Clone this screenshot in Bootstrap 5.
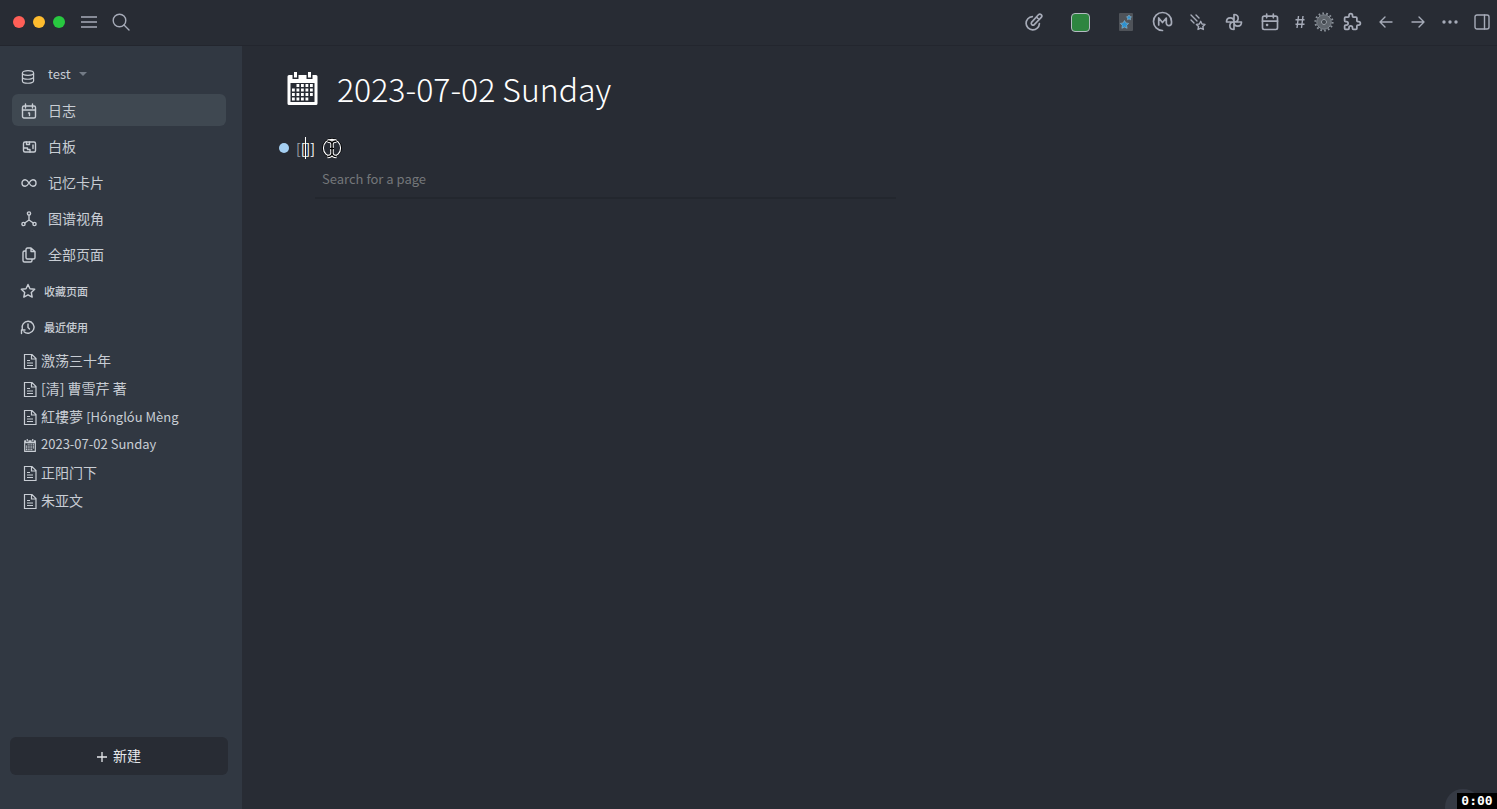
<!DOCTYPE html>
<html lang="zh-CN" data-bs-theme="dark">
<head>
<meta charset="utf-8">
<meta name="viewport" content="width=device-width, initial-scale=1">
<title>2023-07-02 Sunday</title>
<link href="https://cdn.jsdelivr.net/npm/bootstrap@5.3.0/dist/css/bootstrap.min.css" rel="stylesheet">
<style>
  body { background: #282c34; color: #c8cdd4; font: 14px/20px "Noto Sans CJK SC", sans-serif; }
  svg { display: block; flex: none; }
  .line { fill: none; stroke: currentColor; stroke-width: 2; stroke-linecap: round; stroke-linejoin: round; }
  .thin { stroke-width: 1.4; }
  .latin { font-size: 13px; }
  .topbar { height: 46px; padding-bottom: 2px; color: #a6abb8; border-bottom: 1px solid #23262e; }
  .lights { gap: 8px; padding: 0 8px 0 13px; }
  .light { width: 12px; height: 12px; }
  .light-close { background: #ff5f57; }
  .light-min { background: #febc2e; }
  .light-max { background: #28c840; }
  .tool { border: 0; padding: 0; background: none; color: inherit; height: 36px; width: 36px; display: flex; align-items: center; justify-content: center; }
  .tool.slim { width: 32px; }
  .tool.tight { width: 24px; }
  .tool.wide { width: 56px; }
  .tool.edge { width: 31px; }
  .history { padding-left: 2px; }
  .swatch { width: 19px; height: 19px; margin-top: 2px; background: #2e8540; border: 1px solid #b5bac2; border-radius: 4px; }
  .emoji-tile { width: 14px; height: 18px; background: #4f5359; border-radius: 1px; }
  .sidebar { width: 242px; background: #313842; padding: 12px 14px 34px 10px; }
  .sidebar a { color: inherit; text-decoration: none; }
  .sidebar a svg { margin-top: 2px; }
  .graph { border: 0; background: none; color: inherit; height: 32px; margin-bottom: 4px; padding: 0 0 0 11px; gap: 13px; font-size: 13px; text-align: left; }
  .graph > svg { margin-top: 5px; }
  .side-list a { height: 32px; margin: 0 2px 4px; padding: 0 9px; gap: 11px; border-radius: 6px; }
  .side-list a.active { background: #3f4851; }
  .side-head { height: 32px; margin: 0 0 4px; padding: 2px 0 0 10px; gap: 8px; font-size: 11px; font-weight: 500; line-height: 20px; color: #c8cdd4; }
  .recent a { height: 28px; padding-left: 13px; gap: 4px; }
  .create { height: 38px; border: 0; border-radius: 6px; background: #282c34; color: #e6e8eb; gap: 6px; padding-bottom: 3px; }
  .page { padding: 18px 36px; }
  .page h1 { font-size: 32px; font-weight: 300; line-height: 46px; height: 48px; color: #fff; gap: 19px; padding-left: 9px; }
  .block { margin-top: 26px; height: 20px; gap: 7px; color: #fff; }
  .bullet { width: 10px; height: 10px; background: #a5d0f3; margin-left: 1px; }
  .dim { color: #a0a4aa; }
  .caret { width: 1px; height: 22px; background: #fff; left: 50%; top: -1px; }
  .finder { width: 581px; max-width: 100%; margin: 5px 0 0 37px; border-bottom: 2px solid #23272e; }
  .finder input { width: 100%; height: 34px; border: 0; outline: 0; background: none; padding: 0 7px 4px; font-size: 13px; }
  .finder input::placeholder { color: #74777a; opacity: 1; }
  .help-disc { right: 16px; bottom: -16px; width: 36px; height: 36px; background: #353a44; }
  .clock { right: 0; bottom: 0; width: 40px; height: 16px; background: #000; color: #fff; font: bold 13px/16px "DejaVu Sans Mono", monospace; text-align: center; }
</style>
</head>
<body>
<svg width="0" height="0" class="position-absolute" aria-hidden="true">
  <symbol id="file" viewBox="0 0 14 16"><path d="M1.500 1.500h7.500l4 4v10H1.500zM8.500 1.500V6H13M4 7.500h3M4 10h6M4 12.500h6" fill="none" stroke="currentColor" stroke-width="1.200"/></symbol>
  <symbol id="month" viewBox="0 0 30 33"><path fill="currentColor" fill-rule="evenodd" d="M1.500 3H5v4h6V3h8v4h6V3h3.500Q30 3 30 4.500v27q0 1.500-1.500 1.500h-27Q0 33 0 31.500v-27Q0 3 1.500 3zM3 11v19h24V11zM6.500 0h3v5.500h-3zM20.500 0h3v5.500h-3z"/><path stroke="currentColor" stroke-width="2.800" stroke-dasharray="2.800 1.700" d="M9 13.500h16.500M4.500 18h21M4.500 22.500h21M4.500 27h16.500" fill="none"/></symbol>
</svg>
<div class="d-flex flex-column vh-100 overflow-hidden position-relative">
  <header class="topbar d-flex align-items-center flex-shrink-0">
    <div class="lights d-flex align-items-center">
      <span class="light light-close rounded-circle"></span>
      <span class="light light-min rounded-circle"></span>
      <span class="light light-max rounded-circle"></span>
    </div>
    <button class="tool slim" aria-label="Menu"><svg width="16" height="14" viewBox="0 0 16 14" stroke="currentColor" stroke-width="1.500"><path d="M0 2h16M0 7h16M0 12h16"/></svg></button>
    <button class="tool slim" aria-label="Search"><svg width="18" height="18" viewBox="0 0 18 18" class="line thin"><circle cx="7.500" cy="7.500" r="6.300"/><path d="m12 12 5 5"/></svg></button>
    <div class="d-flex align-items-center ms-auto">
      <button class="tool" aria-label="Annotate"><svg width="20" height="20" viewBox="0 0 24 24" class="line"><path d="M10 5.500a8 8 0 1 0 8.500 8.500M9 12.500l8.300-9.200a2.300 2.300 0 0 1 3.400 3.200L12 15.500a2.200 2.200 0 0 1-3-3zM15 6l3 3"/></svg></button>
      <button class="tool wide" aria-label="Colour"><span class="swatch"></span></button>
      <button class="tool" aria-label="Stars"><span class="emoji-tile"><svg width="14" height="18" viewBox="0 0 14 18"><path fill="#2d91cf" stroke="#8eb9cf" stroke-width=".6" d="m5.500 7.500 1.400 2.400 2.800.5-2 2 .4 2.900-2.600-1.200-2.600 1.200.4-2.900-2-2 2.800-.5zM10 2l.8 1.500 1.700.3-1.200 1.200.2 1.700-1.500-.8-1.500.8.200-1.700-1.200-1.200 1.700-.3z"/></svg></span></button>
      <button class="tool" aria-label="Markmap"><svg width="21" height="21" viewBox="0 0 21 21" class="line thin"><path stroke-width="1.700" d="M10.500 19.500A9 9 0 1 1 19.500 10.500v1.500a2.600 2.600 0 0 1-5.200 0V7l-3.800 4.500L6.700 7v7"/></svg></button>
      <button class="tool" aria-label="Shooting star"><svg width="18" height="18" viewBox="0 0 18 18" class="line thin"><path d="m11.700 8.300 1.300 2.700 3 .4-2.200 2.100.6 3-2.700-1.400-2.700 1.400.6-3-2.200-2.100 3-.4zM2 2l6 6M7 2l3 3M2 7l3 3"/></svg></button>
      <button class="tool" aria-label="Pinwheel"><svg width="20" height="20" viewBox="0 0 24 24" class="line"><path d="M12 12V3c3.500 0 5 2 5 4.500S15 12 12 12zM12 12h9c0 3.500-2 5-4.500 5S12 15 12 12zM12 12v9c-3.500 0-5-2-5-4.500S9 12 12 12zM12 12H3c0-3.500 2-5 4.500-5S12 9 12 12z"/></svg></button>
      <button class="tool" aria-label="Calendar"><svg width="20" height="20" viewBox="0 0 24 24" class="line"><rect x="3" y="5" width="18" height="16" rx="2"/><path d="M16 2.500V7M8 2.500V7M3 11h18M8 15h1v1H8z"/></svg></button>
      <button class="tool tight" aria-label="Tags"><svg width="10" height="14" viewBox="0 0 10 14" fill="none" stroke="currentColor" stroke-width="1.400"><path d="M3.500 1 2 13M8 1 6.500 13M.5 4.700h9M.5 9.300h9"/></svg></button>
      <button class="tool tight" aria-label="Settings"><svg width="20" height="20" viewBox="0 0 20 20" fill="none"><circle cx="10" cy="10" r="8.600" stroke="#8d949c" stroke-width="2" stroke-dasharray="1.700 2.160"/><circle cx="10" cy="10" r="5" stroke="#5f656c" stroke-width="4"/><circle cx="10" cy="10" r="7.200" stroke="#848b93"/><circle cx="10" cy="10" r="2.600" fill="#41464d" stroke="#969da4"/></svg></button>
      <button class="tool slim" aria-label="Plugins"><svg width="21" height="21" viewBox="0 0 24 24" class="line"><path d="M4 7h3a1 1 0 0 0 1-1V5a2 2 0 0 1 4 0v1a1 1 0 0 0 1 1h3a1 1 0 0 1 1 1v3a1 1 0 0 0 1 1h1a2 2 0 0 1 0 4h-1a1 1 0 0 0-1 1v3a1 1 0 0 1-1 1h-3a1 1 0 0 1-1-1v-1a2 2 0 0 0-4 0v1a1 1 0 0 1-1 1H4a1 1 0 0 1-1-1v-3a1 1 0 0 1 1-1h1a2 2 0 0 0 0-4H4a1 1 0 0 1-1-1V8a1 1 0 0 1 1-1"/></svg></button>
      <div class="history d-flex">
        <button class="tool slim" aria-label="Back"><svg width="14" height="12" viewBox="0 0 14 12" class="line thin"><path d="M13 6H1M6 1 1 6l5 5"/></svg></button>
        <button class="tool slim" aria-label="Forward"><svg width="14" height="12" viewBox="0 0 14 12" class="line thin"><path d="M1 6h12M8 1l5 5-5 5"/></svg></button>
      </div>
      <button class="tool slim" aria-label="More"><svg width="16" height="4" viewBox="0 0 16 4" fill="currentColor"><circle cx="2" cy="2" r="1.700"/><circle cx="8" cy="2" r="1.700"/><circle cx="14" cy="2" r="1.700"/></svg></button>
      <button class="tool edge" aria-label="Right sidebar"><svg width="16" height="16" viewBox="0 0 16 16" class="line thin"><rect x="1" y="1" width="14" height="14" rx="2"/><path d="M10.500 1v14"/></svg></button>
    </div>
  </header>

  <div class="d-flex flex-grow-1">
    <aside class="sidebar d-flex flex-column flex-shrink-0">
      <button class="graph d-flex align-items-center">
        <svg width="14" height="14" viewBox="0 0 14 14" fill="none" stroke="currentColor" stroke-width="1.200"><ellipse cx="7" cy="3" rx="5.600" ry="2.300"/><path d="M1.400 3v8c0 3 11.200 3 11.200 0V3M1.400 7c0 3 11.200 3 11.200 0"/></svg>
        <span class="d-flex align-items-center gap-2">test <svg width="8" height="4" viewBox="0 0 8 4"><path d="M0 0h8L4 4z" fill="#737b86"/></svg></span>
      </button>
      <nav class="side-list">
        <a href="#" class="active d-flex align-items-center"><svg width="16" height="16" viewBox="0 0 16 16" class="line thin"><rect x="1.500" y="3" width="13" height="12" rx="1.500"/><path d="M4.500 1v4M11.500 1v4M1.500 7h13M7.500 10h1v2.500"/></svg>日志</a>
        <a href="#" class="d-flex align-items-center"><svg width="16" height="16" viewBox="0 0 16 16" class="line thin"><rect x="2.500" y="3" width="12" height="10" rx="1.500"/><path d="M5.500 3v2.500h3V3M3 9h3.500v1.500H9V13M12 6v3.500"/></svg>白板</a>
        <a href="#" class="d-flex align-items-center"><svg width="16" height="16" viewBox="0 0 16 16" class="line thin"><path d="M8 8C6.500 5.500 5.500 4.800 4.200 4.800a3.200 3.200 0 0 0 0 6.400C5.500 11.200 6.500 10.500 8 8s2.500-3.200 3.800-3.200a3.200 3.200 0 0 1 0 6.400C10.500 11.200 9.500 10.500 8 8z"/></svg>记忆卡片</a>
        <a href="#" class="d-flex align-items-center"><svg width="16" height="16" viewBox="0 0 16 16" class="line thin"><circle cx="8" cy="2.500" r="1.600"/><circle cx="2.500" cy="13" r="1.600"/><circle cx="13.500" cy="13" r="1.600"/><path d="M8 4v5M3.700 12 8 9l4.300 3"/></svg>图谱视角</a>
        <a href="#" class="d-flex align-items-center"><svg width="16" height="16" viewBox="0 0 16 16" class="line thin"><path d="M10 1v3.500h4M6.500 1H10l4 3.500v6q0 1.500-1.500 1.500h-6Q5 12 5 10.500v-8Q5 1 6.500 1zM4.500 4H3.500Q2 4 2 5.500v8Q2 15 3.500 15h6q1.500 0 1.500-1.500v-1"/></svg>全部页面</a>
      </nav>
      <h2 class="side-head d-flex align-items-center"><svg width="16" height="16" viewBox="0 0 16 16" class="line thin"><path d="m8 1.500 2 4.200 4.700.6-3.400 3.200.9 4.600L8 11.800l-4.200 2.300.9-4.600L1.300 6.300 6 5.700z"/></svg>收藏页面</h2>
      <h2 class="side-head d-flex align-items-center"><svg width="16" height="16" viewBox="0 0 16 16" class="line thin"><path d="M4 12.700a6 6 0 1 0-1.700-2.700M1.500 14.500V11H5M8 5v3.500l1.500 1.500"/></svg>最近使用</h2>
      <nav class="recent">
        <a href="#" class="d-flex align-items-center"><svg width="14" height="16"><use href="#file"/></svg>激荡三十年</a>
        <a href="#" class="d-flex align-items-center"><svg width="14" height="16"><use href="#file"/></svg>[清] 曹雪芹 著</a>
        <a href="#" class="d-flex align-items-center"><svg width="14" height="16"><use href="#file"/></svg><span>紅樓夢 <span class="latin">[Hónglóu Mèng</span></span></a>
        <a href="#" class="latin d-flex align-items-center"><svg width="14" height="13"><use href="#month"/></svg>2023-07-02 Sunday</a>
        <a href="#" class="d-flex align-items-center"><svg width="14" height="16"><use href="#file"/></svg>正阳门下</a>
        <a href="#" class="d-flex align-items-center"><svg width="14" height="16"><use href="#file"/></svg>朱亚文</a>
      </nav>
      <button class="create d-flex align-items-center justify-content-center mt-auto"><svg class="mt-1" width="10" height="10" viewBox="0 0 10 10" stroke="currentColor" stroke-width="1.300"><path d="M0 5h10M5 0v10"/></svg>新建</button>
    </aside>

    <main class="page flex-grow-1">
      <h1 class="d-flex align-items-center m-0"><svg width="31" height="33"><use href="#month"/></svg>2023-07-02 Sunday</h1>
      <div class="block d-flex align-items-center">
        <span class="bullet rounded-circle"></span>
        <span class="position-relative"><span class="dim">[</span>[]]<span class="caret position-absolute"></span></span>
        <svg width="20" height="22" viewBox="0 0 20 22" fill="none"><circle cx="10" cy="11" r="9.500" stroke="#000"/><circle cx="10" cy="11" r="8.600" stroke="#fff" stroke-width="1.100"/><path d="M5.500 4q4 0 4.500 2.500.5-2.500 4.500-2.500M5.500 19.500q4 0 4.500-3 .5 3 4.500 3M10 6v11M8 11.500h4" stroke="#fff" stroke-width="3.400"/><path d="M5.500 4q4 0 4.500 2.500.5-2.500 4.500-2.500M5.500 19.500q4 0 4.500-3 .5 3 4.500 3M10 6v11M8 11.500h4" stroke="#000" stroke-width="1.500"/></svg>
      </div>
      <div class="finder"><input type="text" placeholder="Search for a page" aria-label="Search for a page"></div>
    </main>
  </div>
  <span class="help-disc rounded-circle position-absolute"></span>
  <time class="clock position-absolute">0:00</time>
</div>
<script src="https://cdn.jsdelivr.net/npm/bootstrap@5.3.0/dist/js/bootstrap.bundle.min.js"></script>
</body>
</html>
